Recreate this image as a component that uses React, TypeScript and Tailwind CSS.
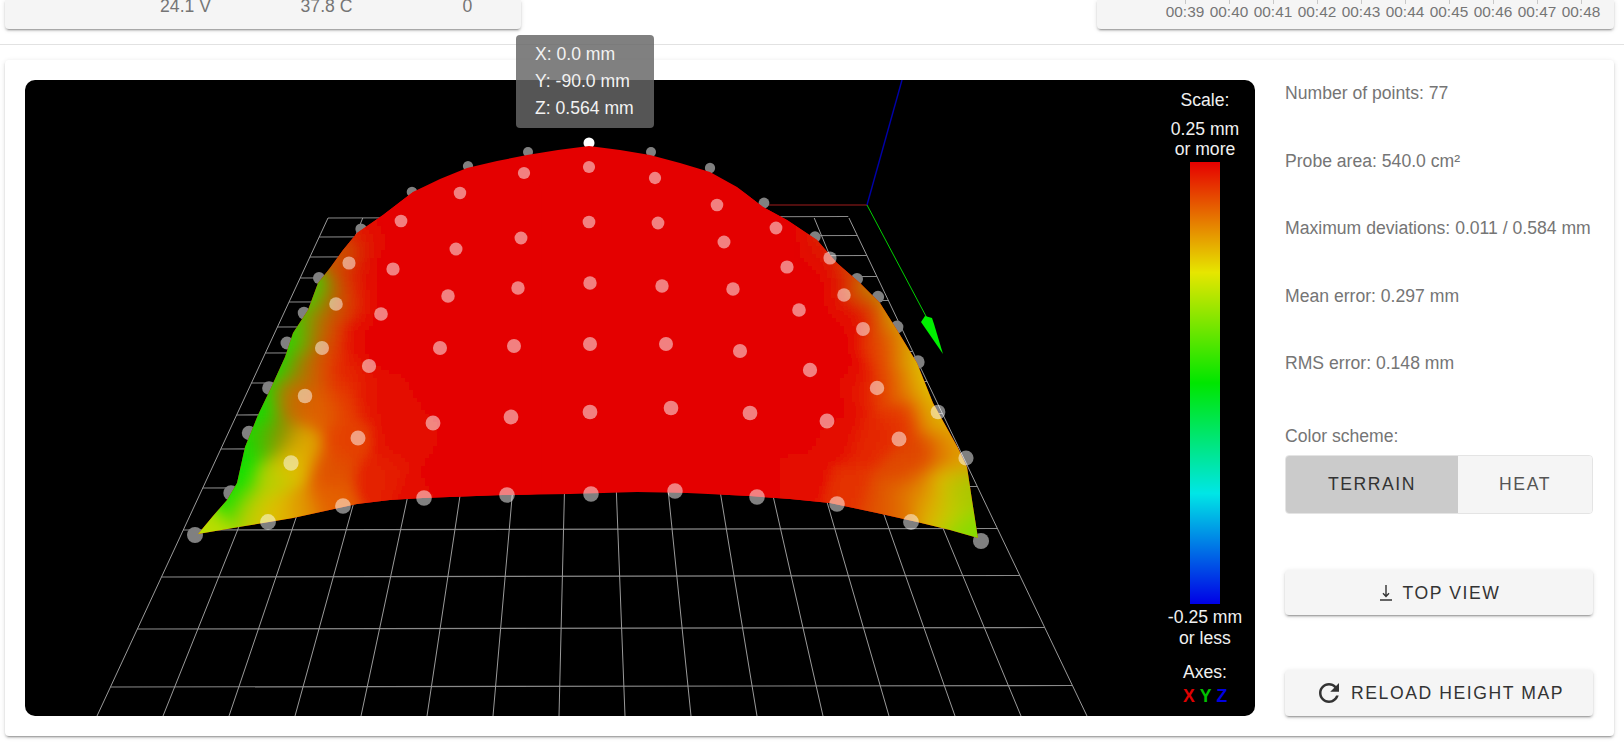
import React, { useMemo } from "react";

const hTopLeft = [218, 237, 257, 278, 302, 327, 353, 383, 415, 449, 488, 530, 577, 629, 687];
const leftX = (y: number) => 328 + ((97 - 328) * (y - 218)) / 498;
const rightX = (y: number) => 849 + ((1087 - 849) * (y - 218)) / 498;

const outline =
  "198,534 213,516 227,500 237,483 245,447 258,415 270,390 285,357 293,333 308,310 318,283 330,268 343,250 357,233 383,215 413,192 440,179 467,168 497,161 527,155 558,150 589,146 620,150 650,155 680,163 710,172 737,187 763,207 787,220 817,240 837,263 860,283 880,303 897,330 917,363 933,403 958,448 967,467 972,500 978,538 950,530 917,522 877,513 830,503 790,499 750,496 687,493 637,492 570,494 503,495 423,498 390,500 357,504 325,511 293,518 245,526";

const behindDots: [number, number][] = [
  [528, 152], [468, 166], [412, 192], [361, 229], [319, 278], [304, 313], [287, 343], [269, 388], [249, 433], [231, 493], [195, 535],
  [651, 152], [710, 168], [764, 203], [815, 237], [857, 279], [878, 297], [897, 327], [918, 362], [981, 541],
];
const overDots: [number, number][] = [
  [938, 412], [966, 458],
  [589, 167], [524, 173], [460, 193], [401, 221], [349, 263], [336, 304], [322, 348], [305, 396], [291, 463], [268, 522],
  [655, 178], [717, 205], [776, 228], [830, 258], [844, 295], [863, 329], [877, 388], [899, 439], [911, 522],
  [589, 222], [521, 238], [456, 249], [393, 269], [381, 314], [369, 366], [358, 438], [343, 506],
  [658, 223], [724, 242], [787, 267], [799, 310], [810, 370], [827, 421], [837, 504],
  [590, 283], [518, 288], [448, 296], [440, 348], [433, 423], [424, 498],
  [662, 286], [733, 289], [740, 351], [750, 413], [757, 497],
  [590, 344], [514, 346], [511, 417], [507, 495],
  [666, 344], [671, 408], [675, 491],
  [590, 412], [591, 494],
];

// colour anchors on the surface: x, y, rgb
const anchors: [number, number, number][] = [
  [198, 534, 0xc0e000], [207, 525, 0xb8dc00], [228, 497, 0x10e000], [237, 480, 0x10e000], [235, 465, 0x10e000],
  [245, 445, 0x10e000], [262, 440, 0x50b800], [278, 435, 0x908800], [300, 445, 0xe0a800], [291, 465, 0xe0c000],
  [270, 480, 0xb8d000], [250, 505, 0xc8cc00], [280, 510, 0xe0c000], [300, 510, 0xe09000], [330, 500, 0xe46000],
  [330, 470, 0xe05000], [345, 440, 0xe44000], [380, 480, 0xe42000], [420, 495, 0xe40800], [320, 410, 0xe06000],
  [345, 400, 0xe44000], [300, 400, 0xd86000], [288, 400, 0xc07000], [265, 400, 0x10e000], [255, 420, 0x10e000],
  [278, 365, 0x10e000], [300, 370, 0xa08000], [320, 370, 0xe05000], [345, 370, 0xe42000], [295, 335, 0x20e000],
  [312, 335, 0xa88000], [330, 340, 0xe04000], [360, 340, 0xe40800], [316, 290, 0x40d000], [335, 300, 0xc06000],
  [350, 300, 0xe43000], [375, 300, 0xe40000], [340, 255, 0xc06000], [347, 268, 0xd84000], [360, 235, 0xe02000],
  [378, 225, 0xe40000], [400, 350, 0xe40000], [390, 400, 0xe41000], [400, 440, 0xe41000], [450, 480, 0xe40000],
  [430, 380, 0xe40000], [400, 260, 0xe40000], [430, 310, 0xe40000], [420, 210, 0xe40000], [470, 440, 0xe40000],
  [375, 345, 0xe40000], [370, 395, 0xe41000], [365, 270, 0xe40000],

  [980, 540, 0x80e000], [968, 525, 0x90d800], [970, 490, 0xa0c800], [950, 510, 0xc8cc00], [930, 505, 0xe0b000],
  [943, 480, 0xe0c000], [960, 490, 0xb0c800], [965, 462, 0xe0a000], [920, 490, 0xe08000], [900, 505, 0xe07000],
  [880, 505, 0xe05000], [850, 495, 0xe43000], [905, 470, 0xe04800], [925, 455, 0xe04000], [945, 450, 0xe07000],
  [955, 442, 0xe0b000], [940, 410, 0xe0c800], [930, 415, 0xe09000], [905, 420, 0xe43000], [925, 380, 0xe0c800],
  [905, 385, 0xe08000], [885, 385, 0xe44000], [860, 385, 0xe41800], [910, 350, 0xd8c000], [895, 350, 0xe07000],
  [880, 350, 0xe43000], [890, 318, 0xc8c000], [878, 325, 0xe05000], [865, 320, 0xe40800], [870, 292, 0xb0a800],
  [860, 300, 0xe03000], [848, 268, 0xd05000], [835, 280, 0xe40800], [822, 243, 0xd83000], [790, 225, 0xe40800],
  [830, 350, 0xe40000], [840, 430, 0xe40800], [870, 440, 0xe42800], [800, 480, 0xe40800], [830, 400, 0xe40000],
  [790, 320, 0xe40000], [780, 260, 0xe40000], [790, 420, 0xe40000], [750, 480, 0xe40000], [750, 200, 0xe40000],
  [845, 370, 0xe40000], [850, 320, 0xe40000], [815, 285, 0xe40000], [815, 257, 0xe40000], [790, 240, 0xe40000],
];

const CELL = 4;
const SIGMA2 = 2 * 13 * 13;

function fieldColor(x: number, y: number) {
  let r = 228e-9;
  let g = 0;
  let b = 0;
  let total = 1e-9;
  for (const [ax, ay, c] of anchors) {
    const w = Math.exp(-((ax - x) ** 2 + (ay - y) ** 2) / SIGMA2);
    r += ((c >> 16) & 255) * w;
    g += ((c >> 8) & 255) * w;
    b += (c & 255) * w;
    total += w;
  }
  return `rgb(${Math.round(r / total)},${Math.round(g / total)},${Math.round(b / total)})`;
}

function ColorField() {
  const cells = useMemo(() => {
    const out: { x: number; y: number; f: string }[] = [];
    for (const [x0, x1] of [[185, 530], [720, 990]]) {
      for (let x = x0; x < x1; x += CELL) {
        for (let y = 190; y < 545; y += CELL) {
          out.push({ x, y, f: fieldColor(x + CELL / 2, y + CELL / 2) });
        }
      }
    }
    return out;
  }, []);
  return (
    <g filter="url(#soft)">
      {cells.map((c) => (
        <rect key={`${c.x}-${c.y}`} x={c.x} y={c.y} width={CELL + 0.5} height={CELL + 0.5} fill={c.f} />
      ))}
    </g>
  );
}

function HeightMap() {
  return (
    <svg viewBox="25 80 1230 636" className="absolute inset-0 block h-full w-full rounded-[10px]">
      <defs>
        <clipPath id="surface">
          <polygon points={outline} />
        </clipPath>
        <filter id="soft" x="-5%" y="-5%" width="110%" height="110%">
          <feGaussianBlur stdDeviation="3" />
        </filter>
      </defs>
      {hTopLeft.map((y) => (
        <line key={y} x1={leftX(y)} y1={y} x2={rightX(y - 1.5)} y2={y - 1.5} stroke="#8a8a8a" strokeWidth="1.2" />
      ))}
      {Array.from({ length: 16 }, (_, i) => (
        <line key={i} x1={328 + 34.73 * i} y1={218} x2={97 + 66 * i} y2={716} stroke="#9a9a9a" strokeWidth="1" />
      ))}
      <line x1="755" y1="205" x2="867" y2="205" stroke="#a01c1c" strokeWidth="1.2" />
      <line x1="867" y1="205" x2="902" y2="80" stroke="#0000a8" strokeWidth="1.4" />
      <line x1="867" y1="205" x2="928" y2="320" stroke="#00d000" strokeWidth="1" />
      <polygon points="921,322 925,316 932,318 934,324 943,354" fill="#00f000" />
      <circle cx="589" cy="143" r="5.5" fill="#ffffff" />
      {behindDots.map(([x, y]) => (
        <circle key={`${x}-${y}`} cx={x} cy={y} r={5 + ((y - 150) / 385) * 3} fill="#808080" />
      ))}
      <g clipPath="url(#surface)">
        <rect x="150" y="130" width="860" height="420" fill="#e40000" />
        <ColorField />
      </g>
      {overDots.map(([x, y]) => (
        <circle key={`${x}-${y}`} cx={x} cy={y} r={6 + ((y - 150) / 385) * 2} fill="#ffffff" fillOpacity="0.5" />
      ))}
    </svg>
  );
}

function ScaleLegend() {
  return (
    <div className="absolute right-[10px] top-0 flex h-full w-[80px] flex-col items-center text-center text-[17.6px] leading-[20px] text-[#f0f0f0]">
      <div className="mt-[10px]">Scale:</div>
      <div className="mt-[9px]">
        0.25 mm
        <br />
        or more
      </div>
      <div className="mt-[3px] h-[442px] w-[30px] bg-[linear-gradient(to_bottom,#e60000,#e6e600_25%,#00e600_50%,#00e6e6_75%,#0000e6)]" />
      <div className="mt-[3px] whitespace-nowrap leading-[20.5px]">
        -0.25 mm
        <br />
        or less
      </div>
      <div className="mt-[14px]">Axes:</div>
      <div className="mt-[4px] flex gap-[5px] font-bold">
        <span className="text-[#e00000]">X</span>
        <span className="text-[#00c000]">Y</span>
        <span className="text-[#0000e0]">Z</span>
      </div>
    </div>
  );
}

const elevated = "shadow-[0_3px_1px_-2px_rgba(0,0,0,0.2),0_2px_2px_0_rgba(0,0,0,0.14),0_1px_5px_0_rgba(0,0,0,0.12)]";

export default function App() {
  const times = ["00:39", "00:40", "00:41", "00:42", "00:43", "00:44", "00:45", "00:46", "00:47", "00:48"];
  return (
    <div className="h-[743px] w-[1624px] overflow-hidden bg-white [font-family:'Liberation_Sans',Arial,sans-serif]">
      <div className="flex h-[29px] justify-between pl-[5px] pr-[10px]">
        <div className={`grid h-[29px] w-[516px] grid-cols-[repeat(3,141px)] overflow-hidden rounded-b bg-[#f5f5f5] pl-[110px] text-center text-[17.6px] leading-[24px] text-[#757575] ${elevated}`}>
          <div className="-mt-[6px]">24.1 V</div>
          <div className="-mt-[6px]">37.8 C</div>
          <div className="-mt-[6px]">0</div>
        </div>
        <div className={`flex h-[29px] w-[517px] justify-end overflow-hidden rounded-b bg-[#f5f5f5] pr-[11px] text-[15.4px] leading-[16px] text-[#757575] ${elevated}`}>
          {times.map((t) => (
            <div key={t} className="flex w-[44px] flex-col items-center">
              <div className="h-[4px] w-px bg-[#c8c8c8]" />
              <div>{t}</div>
            </div>
          ))}
        </div>
      </div>
      <div className="mt-[15px] h-px bg-[#e2e2e2]" />
      <div className={`mx-[5px] mt-[15px] flex h-[676px] w-[1609px] gap-[30px] rounded bg-white pl-[20px] pt-[20px] ${elevated}`}>
        <div className="relative h-[636px] w-[1230px] shrink-0 rounded-[10px] bg-black">
          <HeightMap />
          <ScaleLegend />
          <div className="absolute left-[491px] top-[-45px] w-[138px] rounded bg-[rgba(102,102,102,0.83)] py-[6px] pl-[19px] text-[17.6px] leading-[27px] text-[#f2f2f2]">
            <div>X: 0.0 mm</div>
            <div>Y: -90.0 mm</div>
            <div>Z: 0.564 mm</div>
          </div>
        </div>
        <div className="w-[308px] shrink-0 pt-[1px] text-[17.6px] leading-[24px] text-[#757575]">
          <div className="h-[67.5px]">Number of points: 77</div>
          <div className="h-[67.5px]">Probe area: 540.0 cm²</div>
          <div className="h-[67.5px] whitespace-nowrap">Maximum deviations: 0.011 / 0.584 mm</div>
          <div className="h-[67.5px]">Mean error: 0.297 mm</div>
          <div className="h-[67.5px]">RMS error: 0.148 mm</div>
          <div className="mt-[5px]">Color scheme:</div>
          <div className="mt-[7.5px] flex h-[59px] w-[308px] overflow-hidden rounded border border-[#e4e4e4] tracking-[1.57px]">
            <div className="flex w-[172px] items-center justify-center bg-[#cbcbcb] pb-[1px] text-[#333333]">TERRAIN</div>
            <div className="flex flex-1 items-center justify-center bg-[#f5f5f5] pb-[1px] text-[#555555]">HEAT</div>
          </div>
          <button className={`mt-[56px] flex h-[45px] w-[308px] items-center justify-center rounded bg-[#f5f5f5] tracking-[1.57px] text-[#333333] ${elevated}`}>
            <svg width="16" height="18" viewBox="0 0 16 18" className="mr-[9px]">
              <path d="M8 1v11M5 9.2 8 12.4l3-3.2" fill="none" stroke="#333333" strokeWidth="1.4" />
              <path d="M2 16h12" stroke="#333333" strokeWidth="1.5" />
            </svg>
            TOP VIEW
          </button>
          <button className={`mt-[55px] flex h-[46px] w-[308px] items-center justify-center rounded bg-[#f5f5f5] tracking-[1.57px] text-[#333333] ${elevated}`}>
            <svg width="30" height="30" viewBox="0 0 24 24" className="mr-[7px]" fill="#333333">
              <path d="M17.65 6.35C16.2 4.9 14.21 4 12 4c-4.42 0-7.99 3.58-7.99 8s3.57 8 7.99 8c3.73 0 6.84-2.55 7.73-6h-2.08c-.82 2.33-3.04 4-5.65 4-3.31 0-6-2.69-6-6s2.69-6 6-6c1.66 0 3.14.69 4.22 1.78L13 11h7V4l-2.35 2.35z" />
            </svg>
            RELOAD HEIGHT MAP
          </button>
        </div>
      </div>
    </div>
  );
}
